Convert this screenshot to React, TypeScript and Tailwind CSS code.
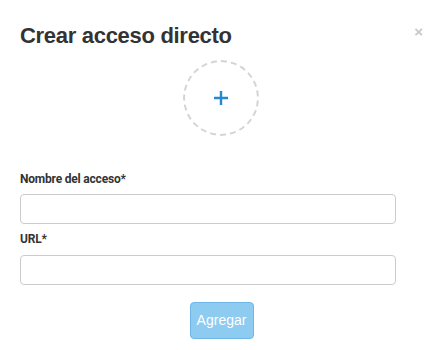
import React from 'react';

export default function App() {
  return (
    <div className="w-[442px] h-[350px] bg-white relative font-['Roboto',sans-serif] text-[#333]">
      {/* cerrar */}
      <button className="absolute right-[19px] top-[24px] text-[#c8c8c8] text-[15px] leading-none font-['Liberation_Sans',sans-serif] font-bold">
        ×
      </button>

      <div className="px-[20px] pt-[22px]">
        <h2 className="text-[22px] leading-[28px] font-bold font-['Liberation_Sans',sans-serif] tracking-[-0.3px] text-[#333]">
          Crear acceso directo
        </h2>

        {/* icono */}
        <div className="flex justify-center mt-[10px]">
          <div className="w-[76px] h-[76px] rounded-full border-2 border-dashed border-[#d4d4d4] flex items-center justify-center">
            <svg width="16" height="16" viewBox="0 0 16 16">
              <path d="M8 1v14M1 8h14" stroke="#2589d0" strokeWidth="2.4" />
            </svg>
          </div>
        </div>

        <form className="mt-[35px]">
          <label className="block text-[12px] leading-[16px] font-bold text-[#333] tracking-[-0.2px] mb-[7px]">
            Nombre del acceso*
          </label>
          <input
            type="text"
            className="block w-[376px] h-[30px] border border-[#ccc] rounded-[4px] outline-none"
          />
          <label className="block text-[12px] leading-[16px] font-bold text-[#333] tracking-[-0.2px] mt-[7px] mb-[8px]">
            URL*
          </label>
          <input
            type="text"
            className="block w-[376px] h-[30px] border border-[#ccc] rounded-[4px] outline-none"
          />
          <div className="flex justify-center mt-[17px] pl-[1px]">
            <button
              type="button"
              className="w-[64px] h-[37px] rounded-[4px] bg-[#8ecbf1] border border-[#6fb7e6] text-white text-[14px] font-['Liberation_Sans',sans-serif]"
            >
              Agregar
            </button>
          </div>
        </form>
      </div>
    </div>
  );
}
